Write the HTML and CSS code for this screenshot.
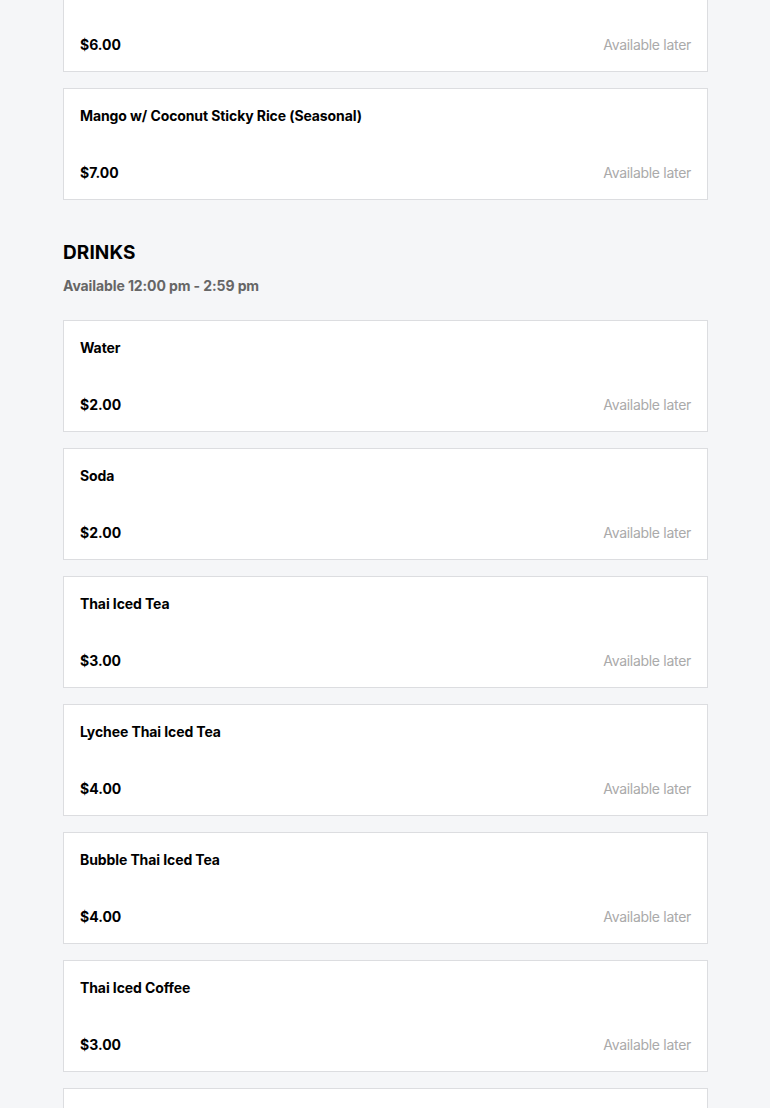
FILE: index.html
```html
<!DOCTYPE html>
<html lang="en">
<head>
<meta charset="utf-8">
<title>Menu</title>
<link rel="stylesheet" href="styles.css">
</head>
<body>
<main class="menu">
  <section class="section first">
    <div class="list">
      <article class="item">
        <div class="item-name">Thai Custard with Sticky Rice</div>
        <div class="item-row"><span class="price">$6.00</span><span class="status">Available later</span></div>
      </article>
      <article class="item">
        <div class="item-name">Mango w/ Coconut Sticky Rice (Seasonal)</div>
        <div class="item-row"><span class="price">$7.00</span><span class="status">Available later</span></div>
      </article>
    </div>
  </section>
  <section class="section">
    <h2 class="section-title">DRINKS</h2>
    <p class="section-hours">Available 12:00 pm - 2:59 pm</p>
    <div class="list">
      <article class="item">
        <div class="item-name">Water</div>
        <div class="item-row"><span class="price">$2.00</span><span class="status">Available later</span></div>
      </article>
      <article class="item">
        <div class="item-name">Soda</div>
        <div class="item-row"><span class="price">$2.00</span><span class="status">Available later</span></div>
      </article>
      <article class="item">
        <div class="item-name">Thai Iced Tea</div>
        <div class="item-row"><span class="price">$3.00</span><span class="status">Available later</span></div>
      </article>
      <article class="item">
        <div class="item-name">Lychee Thai Iced Tea</div>
        <div class="item-row"><span class="price">$4.00</span><span class="status">Available later</span></div>
      </article>
      <article class="item">
        <div class="item-name">Bubble Thai Iced Tea</div>
        <div class="item-row"><span class="price">$4.00</span><span class="status">Available later</span></div>
      </article>
      <article class="item">
        <div class="item-name">Thai Iced Coffee</div>
        <div class="item-row"><span class="price">$3.00</span><span class="status">Available later</span></div>
      </article>
      <article class="item">
        <div class="item-name">Thai Iced Coffee with Boba</div>
        <div class="item-row"><span class="price">$4.00</span><span class="status">Available later</span></div>
      </article>
    </div>
  </section>
</main>
</body>
</html>
```
FILE: styles.css
```css
html, body {
  margin: 0;
  padding: 0;
  background: #f5f6f8;
}
body {
  font-family: Inter, "Noto Sans", Roboto, sans-serif;
  color: #000;
  overflow: hidden;
}
.menu {
  width: 645px;
  margin: -40px 0 0 63px;
}
.section {
  margin-top: 41px;
}
.section.first {
  margin-top: 0;
}
.section-title {
  margin: 0;
  font-size: 19px;
  line-height: 24px;
  font-weight: 700;
  letter-spacing: 0.1px;
}
.section-hours {
  margin: 11px 0 24px;
  font-size: 14px;
  line-height: 20px;
  font-weight: 700;
  color: #666;
  letter-spacing: -0.1px;
}
.list {
  display: flex;
  flex-direction: column;
  gap: 16px;
}
.item {
  background: #fff;
  border: 1px solid #dcdde0;
  padding: 18px 16px 17px;
  display: flex;
  flex-direction: column;
  gap: 39px;
}
.item-name {
  font-size: 14px;
  line-height: 18px;
  font-weight: 700;
  letter-spacing: -0.1px;
}
.item-row {
  display: flex;
  justify-content: space-between;
  align-items: center;
  line-height: 18px;
}
.price {
  font-size: 14px;
  font-weight: 700;
}
.status {
  font-size: 14px;
  font-weight: 400;
  color: #aaa;
  letter-spacing: -0.3px;
}
```
